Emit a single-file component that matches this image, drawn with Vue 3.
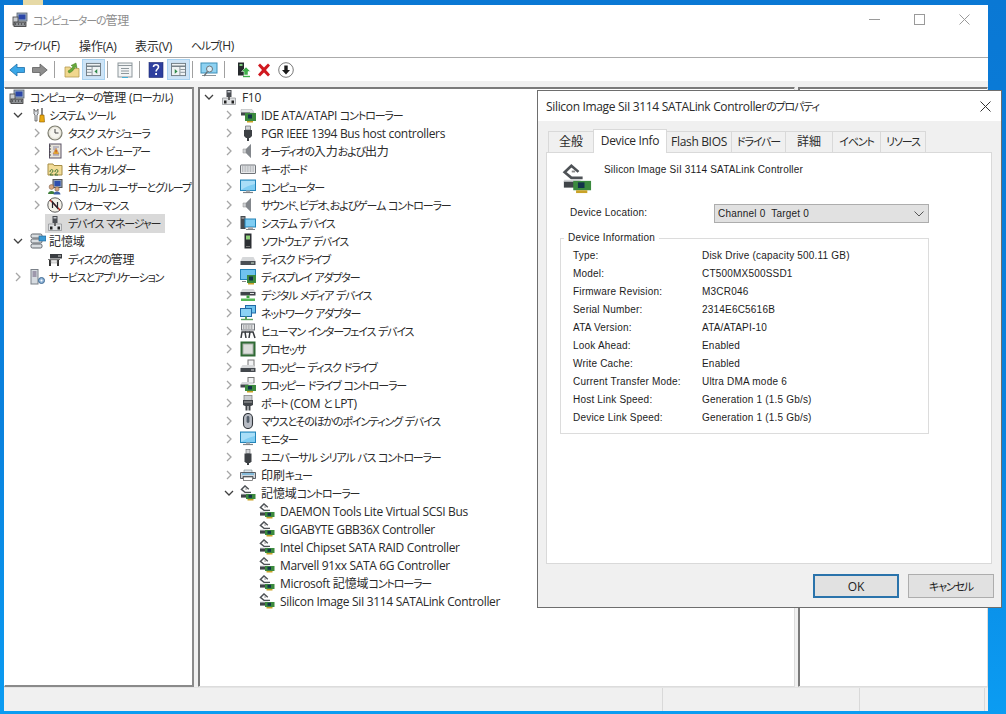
<script setup>
const seg = (text) =>
  (text.match(/[\u3000-\u30ff\uff00-\uffef]+|[\u4e00-\u9fff]+|[^\u3000-\u30ff\uff00-\uffef\u4e00-\u9fff]+/g) || []).map((s) => ({
    t: s,
    c: /^[\u3000-\u30ff\uff00-\uffef]/.test(s) ? 'kana' : /^[\u4e00-\u9fff]/.test(s) ? 'kanji' : 'latin'
  }))

const leftTree = [
  { t: 'コンピューターの管理 (ローカル)', i: 'mgmt', l: 0, c: '' },
  { t: 'システム ツール', i: 'tools', l: 1, c: 'open' },
  { t: 'タスク スケジューラ', i: 'clock', l: 2, c: 'closed' },
  { t: 'イベント ビューアー', i: 'event', l: 2, c: 'closed' },
  { t: '共有フォルダー', i: 'shared', l: 2, c: 'closed' },
  { t: 'ローカル ユーザーとグループ', i: 'users', l: 2, c: 'closed' },
  { t: 'パフォーマンス', i: 'perf', l: 2, c: 'closed' },
  { t: 'デバイス マネージャー', i: 'devmgr', l: 2, c: '', sel: true },
  { t: '記憶域', i: 'storage', l: 1, c: 'open' },
  { t: 'ディスクの管理', i: 'diskmgmt', l: 2, c: '' },
  { t: 'サービスとアプリケーション', i: 'services', l: 1, c: 'closed' }
]
const deviceTree = [
  { t: 'F10', i: 'devmgr', l: 0, c: 'open' },
  { t: 'IDE ATA/ATAPI コントローラー', i: 'ide', l: 1, c: 'closed' },
  { t: 'PGR IEEE 1394 Bus host controllers', i: 'plug', l: 1, c: 'closed' },
  { t: 'オーディオの入力および出力', i: 'speaker', l: 1, c: 'closed' },
  { t: 'キーボード', i: 'keyboard', l: 1, c: 'closed' },
  { t: 'コンピューター', i: 'monitor', l: 1, c: 'closed' },
  { t: 'サウンド、ビデオ、およびゲーム コントローラー', i: 'speaker', l: 1, c: 'closed' },
  { t: 'システム デバイス', i: 'system', l: 1, c: 'closed' },
  { t: 'ソフトウェア デバイス', i: 'software', l: 1, c: 'closed' },
  { t: 'ディスク ドライブ', i: 'disk', l: 1, c: 'closed' },
  { t: 'ディスプレイ アダプター', i: 'display', l: 1, c: 'closed' },
  { t: 'デジタル メディア デバイス', i: 'media', l: 1, c: 'closed' },
  { t: 'ネットワーク アダプター', i: 'network', l: 1, c: 'closed' },
  { t: 'ヒューマン インターフェイス デバイス', i: 'hid', l: 1, c: 'closed' },
  { t: 'プロセッサ', i: 'cpu', l: 1, c: 'closed' },
  { t: 'フロッピー ディスク ドライブ', i: 'floppy', l: 1, c: 'closed' },
  { t: 'フロッピー ドライブ コントローラー', i: 'floppyctl', l: 1, c: 'closed' },
  { t: 'ポート (COM と LPT)', i: 'port', l: 1, c: 'closed' },
  { t: 'マウスとそのほかのポインティング デバイス', i: 'mouse', l: 1, c: 'closed' },
  { t: 'モニター', i: 'monitor', l: 1, c: 'closed' },
  { t: 'ユニバーサル シリアル バス コントローラー', i: 'usb', l: 1, c: 'closed' },
  { t: '印刷キュー', i: 'printer', l: 1, c: 'closed' },
  { t: '記憶域コントローラー', i: 'ctl', l: 1, c: 'open' },
  { t: 'DAEMON Tools Lite Virtual SCSI Bus', i: 'ctl', l: 2, c: '' },
  { t: 'GIGABYTE GBB36X Controller', i: 'ctl', l: 2, c: '' },
  { t: 'Intel Chipset SATA RAID Controller', i: 'ctl', l: 2, c: '' },
  { t: 'Marvell 91xx SATA 6G Controller', i: 'ctl', l: 2, c: '' },
  { t: 'Microsoft 記憶域コントローラー', i: 'ctl', l: 2, c: '' },
  { t: 'Silicon Image SiI 3114 SATALink Controller', i: 'ctl', l: 2, c: '' }
]
const menus = ['ファイル(F)', '操作(A)', '表示(V)', 'ヘルプ(H)']
const tabs = [
  { t: '全般', c: 'tab-a' },
  { t: 'Device Info', c: 'tab-b active' },
  { t: 'Flash BIOS', c: 'tab-c' },
  { t: 'ドライバー', c: 'tab-d' },
  { t: '詳細', c: 'tab-e' },
  { t: 'イベント', c: 'tab-f' },
  { t: 'リソース', c: 'tab-g' }
]
const info = [
  ['Type:', 'Disk Drive (capacity 500.11 GB)'],
  ['Model:', 'CT500MX500SSD1'],
  ['Firmware Revision:', 'M3CR046'],
  ['Serial Number:', '2314E6C5616B'],
  ['ATA Version:', 'ATA/ATAPI-10'],
  ['Look Ahead:', 'Enabled'],
  ['Write Cache:', 'Enabled'],
  ['Current Transfer Mode:', 'Ultra DMA mode 6'],
  ['Host Link Speed:', 'Generation 1 (1.5 Gb/s)'],
  ['Device Link Speed:', 'Generation 1 (1.5 Gb/s)']
]
</script>

<template>
  <div class="desktop">
    <svg class="defs" width="0" height="0" aria-hidden="true">
      <defs>
        <symbol id="mgmt" viewBox="0 0 16 16">
          <rect x="5" y="1" width="10" height="8" fill="#9fb0c4" stroke="#55606e" stroke-width=".8"/>
          <rect x="6.5" y="2.5" width="7" height="5" fill="#2b46a8"/>
          <rect x="1" y="5" width="5" height="8" fill="#c9ccd0" stroke="#444" stroke-width=".8"/>
          <rect x="2" y="10" width="12" height="4.5" fill="#8d9094" stroke="#333" stroke-width=".8"/>
          <path d="M3 12h1M6 12h1M9 12h1M12 12h1" stroke="#222"/>
        </symbol>
        <symbol id="tools" viewBox="0 0 16 16">
          <path d="M4 2v5l1 1v6h2V8l1-1V2L7 4H5z" fill="#dfe3e8" stroke="#555" stroke-width=".8"/>
          <rect x="11" y="1" width="2" height="7" fill="#8a8a8a"/>
          <path d="M10 8h4l.5 7h-5z" fill="#e9a90f" stroke="#8a5a00" stroke-width=".6"/>
        </symbol>
        <symbol id="clock" viewBox="0 0 16 16">
          <circle cx="8" cy="8" r="7" fill="#e8e6dc" stroke="#7d7d70" stroke-width="1.2"/>
          <circle cx="8" cy="8" r="5" fill="#f6f5ef"/>
          <path d="M8 4v4h3.5" stroke="#444" fill="none"/>
        </symbol>
        <symbol id="event" viewBox="0 0 16 16">
          <rect x="2.5" y="1" width="11.5" height="14" fill="#e7e4da" stroke="#5b5366"/>
          <path d="M2 3h2M2 6h2M2 9h2M2 12h2" stroke="#444"/>
          <path d="M6 4h6M6 6h2M6 12h6" stroke="#8a8aa6"/>
          <path d="M9 5l3 6H6z" fill="#ecb92c" stroke="#a66" stroke-width=".5"/>
          <rect x="8.6" y="7" width=".9" height="2.5" fill="#b02020"/>
        </symbol>
        <symbol id="shared" viewBox="0 0 16 16">
          <path d="M1 3h5l1 1.5h8V14H1z" fill="#f2dc98" stroke="#a58c45"/>
          <path d="M3 11c0-3 3-3 3-1s-3 2-3 4h3M8 11c0-3 3-3 3-1s-3 2-3 4h3" stroke="#2f6d2f" fill="none" stroke-width=".9"/>
        </symbol>
        <symbol id="users" viewBox="0 0 16 16">
          <rect x="6" y="0.5" width="9" height="8" fill="#8fa2bc" stroke="#555"/>
          <rect x="7.5" y="2" width="6" height="5" fill="#2f4fae"/>
          <circle cx="4.5" cy="8" r="2.4" fill="#d8a780" stroke="#6d4d34" stroke-width=".5"/>
          <path d="M1 15c0-4 7-4 7 0z" fill="#3f7e3a"/>
          <circle cx="10" cy="10" r="2.2" fill="#d8a780" stroke="#6d4d34" stroke-width=".5"/>
          <path d="M6.5 15.5c0-4 7-4 7 0z" fill="#3c5fa6"/>
        </symbol>
        <symbol id="perf" viewBox="0 0 16 16">
          <circle cx="8" cy="8" r="7.2" fill="#f3f1e8" stroke="#5c5c5c"/>
          <path d="M3 3l10 10" stroke="#b3261e" stroke-width="1.4"/>
          <path d="M5.5 11V5l5 6V5" stroke="#26262e" stroke-width="1.2" fill="none"/>
        </symbol>
        <symbol id="devmgr" viewBox="0 0 16 16">
          <rect x="5.5" y="1" width="5" height="7" fill="#4a4d52"/>
          <rect x="6.5" y="2" width="3" height="1.5" fill="#c4c8cd"/>
          <path d="M1.5 9h13v6.5h-13z" fill="#e0e2e4" stroke="#8a8c90" stroke-width=".7"/>
          <rect x="3" y="11.5" width="2.5" height="3" fill="#222"/>
          <rect x="10.5" y="11.5" width="2.5" height="3" fill="#222"/>
          <rect x="7" y="8" width="2" height="3" fill="#666"/>
        </symbol>
        <symbol id="storage" viewBox="0 0 16 16">
          <rect x="1" y="1" width="11" height="4" rx="1.5" fill="#d9dde0" stroke="#60666c"/>
          <rect x="1" y="6" width="11" height="4" rx="1.5" fill="#d9dde0" stroke="#60666c"/>
          <rect x="1" y="11" width="11" height="4" rx="1.5" fill="#d9dde0" stroke="#60666c"/>
          <rect x="9" y="3" width="7" height="5" fill="#3d9bd4" stroke="#1f5f8c" stroke-width=".6"/>
        </symbol>
        <symbol id="diskmgmt" viewBox="0 0 16 16">
          <path d="M3 3h12v4.5H3z" fill="#3a3d41"/>
          <rect x="11" y="4.5" width="3" height="1" fill="#ddd"/>
          <path d="M1 8h12v1H1z" fill="#777"/>
          <path d="M2 9h2v6H2zM10 9h2v6h-2z" fill="#333"/>
          <path d="M4 9h6v3H4z" fill="#e6e6e6" stroke="#999" stroke-width=".5"/>
        </symbol>
        <symbol id="services" viewBox="0 0 16 16">
          <rect x="1" y="0.5" width="7" height="14.5" fill="#d6dbe0" stroke="#7a8088"/>
          <path d="M2.5 3h4M2.5 5h4M2.5 7h4" stroke="#657"/>
          <circle cx="11.5" cy="11.5" r="3" fill="#8fb4d8" stroke="#3f6a92"/>
          <circle cx="11.5" cy="11.5" r="1" fill="#fff"/>
        </symbol>
        <symbol id="ide" viewBox="0 0 16 16">
          <path d="M1 2.5h11l2 3H1z" fill="#e1e3e5" stroke="#a8aaac" stroke-width=".5"/>
          <path d="M1 5.5h9v3H1z" fill="#42474c"/>
          <rect x="5" y="6" width="11" height="8" fill="#3b8a3e"/>
          <rect x="8" y="7.5" width="4" height="4" fill="#13334a"/>
          <rect x="7" y="14" width="6" height="1.5" fill="#c9a227"/>
        </symbol>
        <symbol id="plug" viewBox="0 0 16 16">
          <path d="M5.5 1h5v4h-5z" fill="#d3d5d8" stroke="#62666a" stroke-width=".7"/>
          <path d="M4 5h8v6l-2 2H6l-2-2z" fill="#3d4145"/>
          <rect x="7" y="13" width="2" height="3" fill="#3d4145"/>
        </symbol>
        <symbol id="speaker" viewBox="0 0 16 16">
          <path d="M3 6h3l5-5v14l-5-5H3z" fill="#b7bbc0"/>
          <path d="M6 6l5-5v14l-5-5z" fill="#83878c"/>
          <path d="M3 6h3v4H3z" fill="#cfd2d5" stroke="#888" stroke-width=".5"/>
        </symbol>
        <symbol id="keyboard" viewBox="0 0 16 16">
          <rect x="0.5" y="4" width="15" height="8.5" rx=".5" fill="#e7e9eb" stroke="#6f7378"/>
          <path d="M2 6h12M2 8h12M2 10h12" stroke="#8f9398" stroke-dasharray="1 .6"/>
        </symbol>
        <symbol id="monitor" viewBox="0 0 16 16">
          <rect x="0.5" y="1" width="15" height="10.5" fill="#7fcdf3" stroke="#2484b8"/>
          <path d="M1 2h14v3C10 6 5 8 1 11z" fill="#a9def8"/>
          <path d="M6 11.5h4v1.5H6z" fill="#b3b5b8"/>
          <path d="M3 13.5h10" stroke="#7e8286" stroke-width="1.2"/>
        </symbol>
        <symbol id="system" viewBox="0 0 16 16">
          <rect x="0.5" y="1" width="5" height="13" fill="#474b50"/>
          <rect x="1.5" y="2.5" width="3" height="1" fill="#ccc"/>
          <rect x="5" y="4" width="10.5" height="8" fill="#7fcdf3" stroke="#2484b8"/>
          <path d="M8 12h5v2H8z" fill="#a8abb0"/>
          <path d="M6 14.5h9" stroke="#7e8286"/>
        </symbol>
        <symbol id="software" viewBox="0 0 16 16">
          <rect x="4.5" y="0.5" width="7" height="15" fill="#2c2f33"/>
          <rect x="6" y="2.5" width="4" height="4" fill="#8fd27a"/>
          <rect x="6" y="13" width="4" height="1" fill="#777"/>
        </symbol>
        <symbol id="disk" viewBox="0 0 16 16">
          <path d="M2.5 6h11l2 4H.5z" fill="#d6d8da"/>
          <path d="M.5 10h15v4H.5z" fill="#4a4f54"/>
          <rect x="11" y="11.5" width="3" height="1" fill="#cfe8cf"/>
        </symbol>
        <symbol id="display" viewBox="0 0 16 16">
          <rect x="0.5" y="0.5" width="15" height="10" fill="#6fc3ee" stroke="#2484b8"/>
          <rect x="7" y="6" width="9" height="8" fill="#3b8a3e"/>
          <rect x="9" y="7.5" width="4" height="4" fill="#13334a"/>
          <rect x="8" y="14" width="6" height="1.5" fill="#c9a227"/>
          <path d="M2 12.5h4" stroke="#888"/>
        </symbol>
        <symbol id="media" viewBox="0 0 16 16">
          <path d="M2.5 2h11l2 3H.5z" fill="#d6d8da"/>
          <path d="M.5 5h15v3.5H.5z" fill="#3e4348"/>
          <rect x="10" y="6" width="4" height="1" fill="#ddd"/>
          <path d="M6.5 8.5h3V11h-3z" fill="#3da33d"/>
          <path d="M1 11.5h14v2.5H1z" fill="#55b755"/>
        </symbol>
        <symbol id="network" viewBox="0 0 16 16">
          <rect x="5.5" y="0.5" width="10" height="7.5" fill="#6fc3ee" stroke="#2069a5"/>
          <rect x="0.5" y="3.5" width="11" height="8" fill="#8bd2f4" stroke="#2069a5"/>
          <path d="M5 11.5h2V14H5z" fill="#5aa05a"/>
          <path d="M1 14.5h12" stroke="#5aa05a" stroke-width="1.4"/>
        </symbol>
        <symbol id="hid" viewBox="0 0 16 16">
          <rect x="1.5" y="1" width="13" height="6" fill="#e7e9eb" stroke="#6f7378"/>
          <path d="M3 3h10M3 5h10" stroke="#777" stroke-dasharray="1 .6"/>
          <path d="M1 15l1-6h3l1 6M9 15l1-6h3l2 6" fill="none" stroke="#36393d" stroke-width="1.5"/>
          <path d="M5 9h5" stroke="#36393d" stroke-width="1.5"/>
        </symbol>
        <symbol id="cpu" viewBox="0 0 16 16">
          <rect x="0.5" y="0.5" width="15" height="15" fill="#2f6a34"/>
          <rect x="3" y="3" width="10" height="10" fill="#dcdedb" stroke="#a8b0a8"/>
        </symbol>
        <symbol id="floppy" viewBox="0 0 16 16">
          <rect x="8" y="1" width="6" height="6" fill="#f2f3f4" stroke="#777"/>
          <path d="M2.5 6h11l2 3H.5z" fill="#d6d8da"/>
          <path d="M.5 9h15v4H.5z" fill="#42474c"/>
          <rect x="11" y="10.5" width="3" height="1" fill="#ddd"/>
        </symbol>
        <symbol id="floppyctl" viewBox="0 0 16 16">
          <rect x="8" y="0.5" width="6" height="5" fill="#f2f3f4" stroke="#777"/>
          <path d="M2 5h11l2 2.5H.5z" fill="#d6d8da"/>
          <path d="M.5 7.5h8v3h-8z" fill="#42474c"/>
          <rect x="5" y="8" width="11" height="6" fill="#3b8a3e"/>
          <rect x="8" y="9" width="4" height="3.5" fill="#13334a"/>
          <rect x="7" y="14" width="6" height="1.5" fill="#c9a227"/>
        </symbol>
        <symbol id="port" viewBox="0 0 16 16">
          <rect x="4" y="0.5" width="8" height="5" fill="#c9ccd0" stroke="#777" stroke-width=".7"/>
          <path d="M3 5h10v5l-2 1H5l-2-1z" fill="#404448"/>
          <path d="M4 7h8" stroke="#aaa"/>
          <path d="M5.5 11h2v4.5h-2zM8.5 11h2v4.5h-2z" fill="#404448"/>
        </symbol>
        <symbol id="mouse" viewBox="0 0 16 16">
          <rect x="3.5" y="0.5" width="9" height="15" rx="4.5" fill="#b8bcc4" stroke="#33373c" stroke-width="1.1"/>
          <rect x="6.6" y="3" width="2.8" height="7" rx="1.4" fill="#55606c"/>
        </symbol>
        <symbol id="usb" viewBox="0 0 16 16">
          <rect x="6" y="0.5" width="4" height="4" fill="#d3d5d8" stroke="#62666a" stroke-width=".6"/>
          <path d="M4.5 4.5h7v8l-1.5 1.5H6l-1.5-1.5z" fill="#3d4145"/>
          <rect x="7" y="14" width="2" height="2" fill="#3d4145"/>
        </symbol>
        <symbol id="printer" viewBox="0 0 16 16">
          <path d="M4 3h8v3H4z" fill="#dfe7ee" stroke="#788" stroke-width=".6"/>
          <path d="M.5 5.5h15v6h-2.5v-2H3v2H.5z" fill="#cfd6dc" stroke="#4a5058" stroke-width=".9"/>
          <rect x="3.5" y="10" width="9" height="3.5" fill="#fff" stroke="#555" stroke-width=".7"/>
          <path d="M2 7h12" stroke="#3aa0d8"/>
        </symbol>
        <symbol id="ctl" viewBox="0 0 16 16">
          <path d="M8.8 4.2L5 .9 1.4 4.4 5 7.4h6" fill="none" stroke="#4e5256" stroke-width="1.4"/>
          <path d="M7 4H5.2" stroke="#888" stroke-width="1"/>
          <path d="M1 9h9v3.6H1z" fill="#3f4448"/>
          <path d="M1 8.4h8l1 1H1z" fill="#d3d5d7"/>
          <rect x="6" y="9" width="9.5" height="5" fill="#3b8a3e"/>
          <rect x="8.5" y="9.8" width="3.5" height="3" fill="#13334a"/>
          <rect x="7.5" y="14" width="6" height="1.5" fill="#c9a227"/>
        </symbol>
      </defs>
    </svg>

    <div class="folder-peek"></div>

    <section class="window">
      <header class="titlebar">
        <svg class="ico title-ico"><use href="#mgmt" /></svg>
        <span class="title"><span v-for="(s, n) in seg('コンピューターの管理')" :key="n" :class="s.c">{{ s.t }}</span></span>
        <span class="caps">
          <svg width="11" height="11" viewBox="0 0 11 11"><path d="M0 5.5h11" stroke="#9a9a9a" /></svg>
          <svg width="11" height="11" viewBox="0 0 11 11"><rect x=".5" y=".5" width="10" height="10" fill="none" stroke="#9a9a9a" /></svg>
          <svg width="11" height="11" viewBox="0 0 11 11"><path d="M.5.5l10 10M10.5.5l-10 10" stroke="#9a9a9a" /></svg>
        </span>
      </header>

      <nav class="menubar">
        <span v-for="m in menus" :key="m" class="menu"><span v-for="(s, n) in seg(m)" :key="n" :class="s.c">{{ s.t }}</span></span>
      </nav>

      <div class="toolbar">
        <svg class="tb back" viewBox="0 0 16 16"><path d="M8 2v3.5h7.5v5H8V14L.8 8z" fill="#3aa7e8" stroke="#1d6ea8" stroke-width=".8" /></svg>
        <svg class="tb fwd" viewBox="0 0 16 16"><path d="M8 2v3.5H.5v5H8V14l7.2-6z" fill="#8e8e8e" stroke="#5e5e5e" stroke-width=".8" /></svg>
        <i class="sep s1"></i>
        <svg class="tb up" viewBox="0 0 16 16"><path d="M1 5h5l1 1.5h8V15H1z" fill="#f0d78e" stroke="#b59a50" stroke-width=".8" /><path d="M4 9c2-1 4-3 5-5l-2-.5L12 1l1 5-2-1c-1 3-3 5-6 6z" fill="#67a93a" stroke="#3f7a1d" stroke-width=".5" /></svg>
        <span class="toggle t1"><svg class="tb inner" viewBox="0 0 16 16"><rect x=".5" y="1.5" width="15" height="13" fill="#eef2f4" stroke="#6e7a82" /><path d="M1 4.5h14" stroke="#6e7a82" stroke-width="1.5" /><path d="M6.5 5v9M1 8h5M1 11h5" stroke="#6e7a82" stroke-width=".8" /><path d="M12 7.5v5l-3-2.5z" fill="#2f8a4a" /></svg></span>
        <i class="sep s2"></i>
        <svg class="tb list" viewBox="0 0 16 16"><rect x="1" y="1" width="14" height="14" fill="#f2f4f5" stroke="#8e979c" /><path d="M1 3.5h14" stroke="#8e979c" /><path d="M4 6.5h8M4 9h8M4 11.5h8" stroke="#8e979c" /><rect x="5" y="15" width="6" height="1" fill="#45b0d8" /></svg>
        <i class="sep s3"></i>
        <svg class="tb help" viewBox="0 0 16 16"><rect x="1" y=".5" width="14" height="15" fill="#2e3f9f" stroke="#1d2a70" stroke-width=".6" /><path d="M5.5 5c0-3 5-3 5 0 0 2-2.4 2-2.4 4.5" fill="none" stroke="#fff" stroke-width="1.6" /><rect x="7.2" y="11" width="1.8" height="2" fill="#fff" /></svg>
        <span class="toggle t2"><svg class="tb inner" viewBox="0 0 16 16"><rect x=".5" y="1.5" width="15" height="13" fill="#eef2f4" stroke="#6e7a82" /><path d="M1 4.5h14" stroke="#6e7a82" stroke-width="1.5" /><path d="M9.5 5v9M10 8h5M10 11h5" stroke="#6e7a82" stroke-width=".8" /><path d="M4 7.5v5l3-2.5z" fill="#2f8a4a" /></svg></span>
        <i class="sep s4"></i>
        <svg class="tb scan" viewBox="0 0 18 16"><rect x="1" y="1" width="16" height="10" fill="#8ed2f2" stroke="#3d8fb8" /><path d="M2 13.5h14" stroke="#8d9499" /><circle cx="9.5" cy="7" r="3" fill="#d8eef8" stroke="#6b7378" /><path d="M7.5 9.5L4 14" stroke="#6b7378" stroke-width="1.3" /></svg>
        <i class="sep s5"></i>
        <svg class="tb update" viewBox="0 0 16 16"><rect x="3" y=".5" width="6" height="13" fill="#262a2d" /><rect x="4.5" y="2" width="3" height="2" fill="#7fc97f" /><path d="M11 5l4.5 4.5h-2.5V13H9V9.5H6.5z" fill="#3fb04a" stroke="#fff" stroke-width=".5" /><path d="M8 14.5h7" stroke="#3fb04a" stroke-width="1.4" /></svg>
        <svg class="tb del" viewBox="0 0 16 16"><path d="M2 3.5L4 1.5 8 5.5l4-4 2 2-4 4.5 4 4.5-2 2-4-4-4 4-2-2 4-4.5z" fill="#d0181f" /></svg>
        <svg class="tb down" viewBox="0 0 16 16"><circle cx="8" cy="8" r="7.3" fill="#fff" stroke="#7a7a7a" /><path d="M6.3 3.5h3.4V8h2.3L8 12.5 4 8h2.3z" fill="#1a1a1a" /></svg>
      </div>

      <div class="panes">
        <div class="pane left">
          <div v-for="r in leftTree" :key="r.t" class="row" :class="['ll' + r.l, { sel: r.sel }]">
            <svg v-if="r.c" class="chev" viewBox="0 0 10 10">
              <path v-if="r.c === 'closed'" d="M3 1l4 4-4 4" fill="none" stroke="#a6a6a6" stroke-width="1.3" />
              <path v-else d="M1 3l4 4 4-4" fill="none" stroke="#404040" stroke-width="1.3" />
            </svg>
            <svg class="ico"><use :href="'#' + r.i" /></svg>
            <span class="label"><span v-for="(s, n) in seg(r.t)" :key="n" :class="s.c">{{ s.t }}</span></span>
          </div>
        </div>
        <div class="pane center">
          <div v-for="r in deviceTree" :key="r.t" class="row" :class="'cl' + r.l">
            <svg v-if="r.c" class="chev" viewBox="0 0 10 10">
              <path v-if="r.c === 'closed'" d="M3 1l4 4-4 4" fill="none" stroke="#a6a6a6" stroke-width="1.3" />
              <path v-else d="M1 3l4 4 4-4" fill="none" stroke="#404040" stroke-width="1.3" />
            </svg>
            <svg class="ico"><use :href="'#' + r.i" /></svg>
            <span class="label"><span v-for="(s, n) in seg(r.t)" :key="n" :class="s.c">{{ s.t }}</span></span>
          </div>
        </div>
        <div class="pane right"></div>
      </div>

      <footer class="status">
        <span class="cell c1"></span>
        <span class="cell c2"></span>
        <span class="cell c3"></span>
      </footer>
    </section>

    <section class="dialog">
      <header class="dlg-title">
        <span><span v-for="(s, n) in seg('Silicon Image SiI 3114 SATALink Controllerのプロパティ')" :key="n" :class="s.c">{{ s.t }}</span></span>
        <svg width="11" height="11" viewBox="0 0 11 11"><path d="M.5.5l10 10M10.5.5l-10 10" stroke="#333" /></svg>
      </header>
      <div class="dlg-body">
        <div class="tabs">
          <span v-for="t in tabs" :key="t.t" class="tab" :class="t.c"><span v-for="(s, n) in seg(t.t)" :key="n" :class="s.c">{{ s.t }}</span></span>
        </div>
        <div class="page">
          <div class="dev-head">
            <svg class="dev-ico"><use href="#ctl" /></svg>
            <span>Silicon Image SiI 3114 SATALink Controller</span>
          </div>
          <div class="loc">
            <span class="loc-label">Device Location:</span>
            <div class="combo">
              <span>Channel 0 &nbsp;Target 0</span>
              <svg width="10" height="6" viewBox="0 0 10 6"><path d="M.5.5L5 5 9.5.5" fill="none" stroke="#555" /></svg>
            </div>
          </div>
          <fieldset class="group">
            <legend>Device Information</legend>
            <div v-for="[k, v] in info" :key="k" class="info-row">
              <span class="k">{{ k }}</span>
              <span>{{ v }}</span>
            </div>
          </fieldset>
        </div>
        <div class="buttons">
          <button class="btn primary">OK</button>
          <button class="btn"><span v-for="(s, n) in seg('キャンセル')" :key="n" :class="s.c">{{ s.t }}</span></button>
        </div>
      </div>
    </section>
  </div>
</template>

<style>
html, body { margin: 0; padding: 0; }
</style>

<style scoped>
.desktop {
  position: relative;
  width: 1006px;
  height: 714px;
  overflow: hidden;
  background: linear-gradient(180deg, #0a78d4 0%, #0a82de 60%, #0b9cf2 100%);
  font-family: "Open Sans", "Noto Sans CJK JP", sans-serif;
  font-size: 12px;
  color: #2a2a2a;
  font-feature-settings: "palt";
}
.kana { font-size: 11px; letter-spacing: -1.15px; }
.kanji { font-size: 12px; letter-spacing: -.1px; }
.latin { letter-spacing: -.33px; }
.defs { position: absolute; }
.folder-peek { position: absolute; left: 23px; top: 0; width: 20px; height: 5px; background: #e6d9a6; }

.window {
  position: absolute;
  left: 4px;
  top: 5px;
  width: 984px;
  height: 706px;
  display: flex;
  flex-direction: column;
  background: #f0f0f0;
}
.titlebar {
  height: 29px;
  background: #fff;
  display: flex;
  align-items: center;
  padding: 0 18px 0 8px;
  flex: none;
}
.ico { width: 16px; height: 16px; flex: none; }
.title { margin-left: 5px; color: #8e8e8e; }
.caps { margin-left: auto; display: flex; gap: 34px; }
.menubar {
  height: 23px;
  background: #fff;
  border-bottom: 1px solid #ababab;
  display: flex;
  align-items: center;
  padding-left: 10px;
  flex: none;
}
.menu { width: 56px; }
.menu:first-child { width: 65px; }
.toolbar {
  height: 23px;
  background: #fff;
  flex: none;
  display: grid;
  grid-template-columns: repeat(300, 1px);
  align-items: center;
}
.tb { width: 16px; height: 16px; grid-row: 1; }
.back { grid-column: 6 / span 16; }
.fwd { grid-column: 29 / span 16; }
.sep { grid-row: 1; width: 1px; height: 17px; background: #a0a0a0; }
.s1 { grid-column: 51; }
.up { grid-column: 61 / span 16; }
.toggle {
  grid-row: 1;
  box-sizing: border-box;
  height: 21px;
  width: 23px;
  background: #cde4f7;
  border: 1px solid #a9d2f0;
  display: flex;
  align-items: center;
  justify-content: center;
}
.inner { width: 15px; height: 15px; }
.t1 { grid-column: 79 / span 23; }
.s2 { grid-column: 104; }
.list { grid-column: 114 / span 16; }
.s3 { grid-column: 136; }
.help { grid-column: 145 / span 16; }
.t2 { grid-column: 164 / span 23; }
.s4 { grid-column: 189; }
.scan { grid-column: 197 / span 18; width: 18px; }
.s5 { grid-column: 221; }
.update { grid-column: 232 / span 16; }
.del { grid-column: 253 / span 16; }
.down { grid-column: 275 / span 16; }

.panes {
  flex: 1;
  min-height: 0;
  margin-top: 6px;
  display: flex;
  background: #f0f0f0;
}
.pane {
  box-sizing: border-box;
  background: #fff;
  border: 1px solid #dcdcdc;
  border-top-color: #7a7a7a;
  border-left-color: #7a7a7a;
  box-shadow: inset 0 1px #7a7a7a;
  overflow: hidden;
}
.left {
  width: 190px;
  border-left-color: #fff;
  border-right: 2px solid #8a8a8a;
  border-bottom: 2px solid #8a8a8a;
}
.center { width: 597px; margin-left: 4px; box-shadow: inset 1px 1px #7a7a7a; }
.right { flex: 1; margin-left: 3px; box-shadow: inset 1px 1px #7a7a7a; }
.row {
  height: 18px;
  display: flex;
  align-items: center;
  white-space: nowrap;
  position: relative;
}
.label { margin-left: 5px; }
.chev { position: absolute; width: 10px; height: 10px; top: 4px; }
.row .ico { position: relative; }
.ll0 { padding-left: 4px; }
.ll1 { padding-left: 25px; }
.ll1 .label { margin-left: 3px; }
.ll1 .chev { left: 8px; }
.ll2 { padding-left: 42px; }
.ll2 .chev { left: 27px; }
.sel::before {
  content: "";
  position: absolute;
  left: 40px;
  top: 0;
  width: 120px;
  height: 19px;
  background: #d9d9d9;
}
.sel .label { position: relative; }
.cl0 { padding-left: 22px; }
.cl0 .chev { left: 5px; }
.cl1 { padding-left: 41px; }
.cl1 .chev { left: 25px; }
.cl2 { padding-left: 60px; }

.status { height: 23px; flex: none; display: flex; background: #f0f0f0; border-top: 1px solid #e4e4e4; }
.cell { display: block; box-sizing: border-box; border-right: 1px solid #d9d9d9; height: 100%; }
.c1 { width: 659px; }
.c2 { width: 197px; }
.c3 { width: 125px; }

.dialog {
  position: absolute;
  left: 537px;
  top: 90px;
  width: 465px;
  height: 518px;
  box-sizing: border-box;
  border: 1px solid #6e6e6e;
  background: #f0f0f0;
  display: flex;
  flex-direction: column;
}
.dlg-title {
  height: 30px;
  flex: none;
  background: #fff;
  display: flex;
  align-items: center;
  justify-content: space-between;
  padding: 0 10px 0 8px;
}
.dlg-body { flex: 1; padding: 10px 9px 0 8px; display: flex; flex-direction: column; }
.tabs { display: flex; height: 21px; align-items: flex-end; position: relative; padding-left: 2px; }
.tab {
  box-sizing: border-box;
  height: 21px;
  line-height: 20px;
  text-align: center;
  white-space: nowrap;
  background: #f0f0f0;
  border: 1px solid #d9d9d9;
  border-bottom: none;
  margin-left: -1px;
}
.tab-a { width: 46px; margin-left: 0; }
.tab-b { width: 74px; }
.tab-c { width: 66px; }
.tab-d { width: 55px; }
.tab-e { width: 48px; }
.tab-f { width: 49px; }
.tab-g { width: 46px; }
.active {
  background: #fff;
  height: 24px;
  line-height: 21px;
  margin-bottom: -1px;
  position: relative;
  z-index: 1;
}
.page {
  box-sizing: border-box;
  width: 446px;
  height: 412px;
  background: #fff;
  border: 1px solid #d9d9d9;
  padding: 10px 13px 0;
  font-family: "Liberation Sans", sans-serif;
  font-size: 10px;
  letter-spacing: .2px;
  color: #1c1c1c;
}
.dev-head { display: flex; gap: 12px; height: 32px; padding-left: 2px; }
.dev-head span { margin-top: 1px; }
.dev-ico { width: 30px; height: 32px; }
.loc { display: flex; align-items: center; margin-top: 9px; padding-left: 10px; }
.loc-label { width: 144px; margin-top: -2px; }
.combo {
  box-sizing: border-box;
  width: 215px;
  height: 19px;
  background: #e1e1e1;
  border: 1px solid #adadad;
  display: flex;
  align-items: center;
  justify-content: space-between;
  padding: 0 4px 0 3px;
}
.group {
  box-sizing: border-box;
  width: 369px;
  height: 202px;
  margin: 9px 0 0;
  padding: 2px 0 0 12px;
  border: 1px solid #dcdcdc;
}
.group legend { padding: 0 4px; margin-left: -9px; line-height: 12px; }
.info-row { display: flex; height: 18px; align-items: center; }
.k { width: 129px; flex: none; }
.buttons { display: flex; justify-content: flex-end; gap: 9px; padding-top: 10px; margin-right: -2px; }
.btn {
  box-sizing: border-box;
  width: 86px;
  height: 24px;
  background: #e1e1e1;
  border: 1px solid #adadad;
  font: inherit;
  color: #222;
  padding: 0;
}
.primary { border: 2px solid #2a73ab; }
</style>
